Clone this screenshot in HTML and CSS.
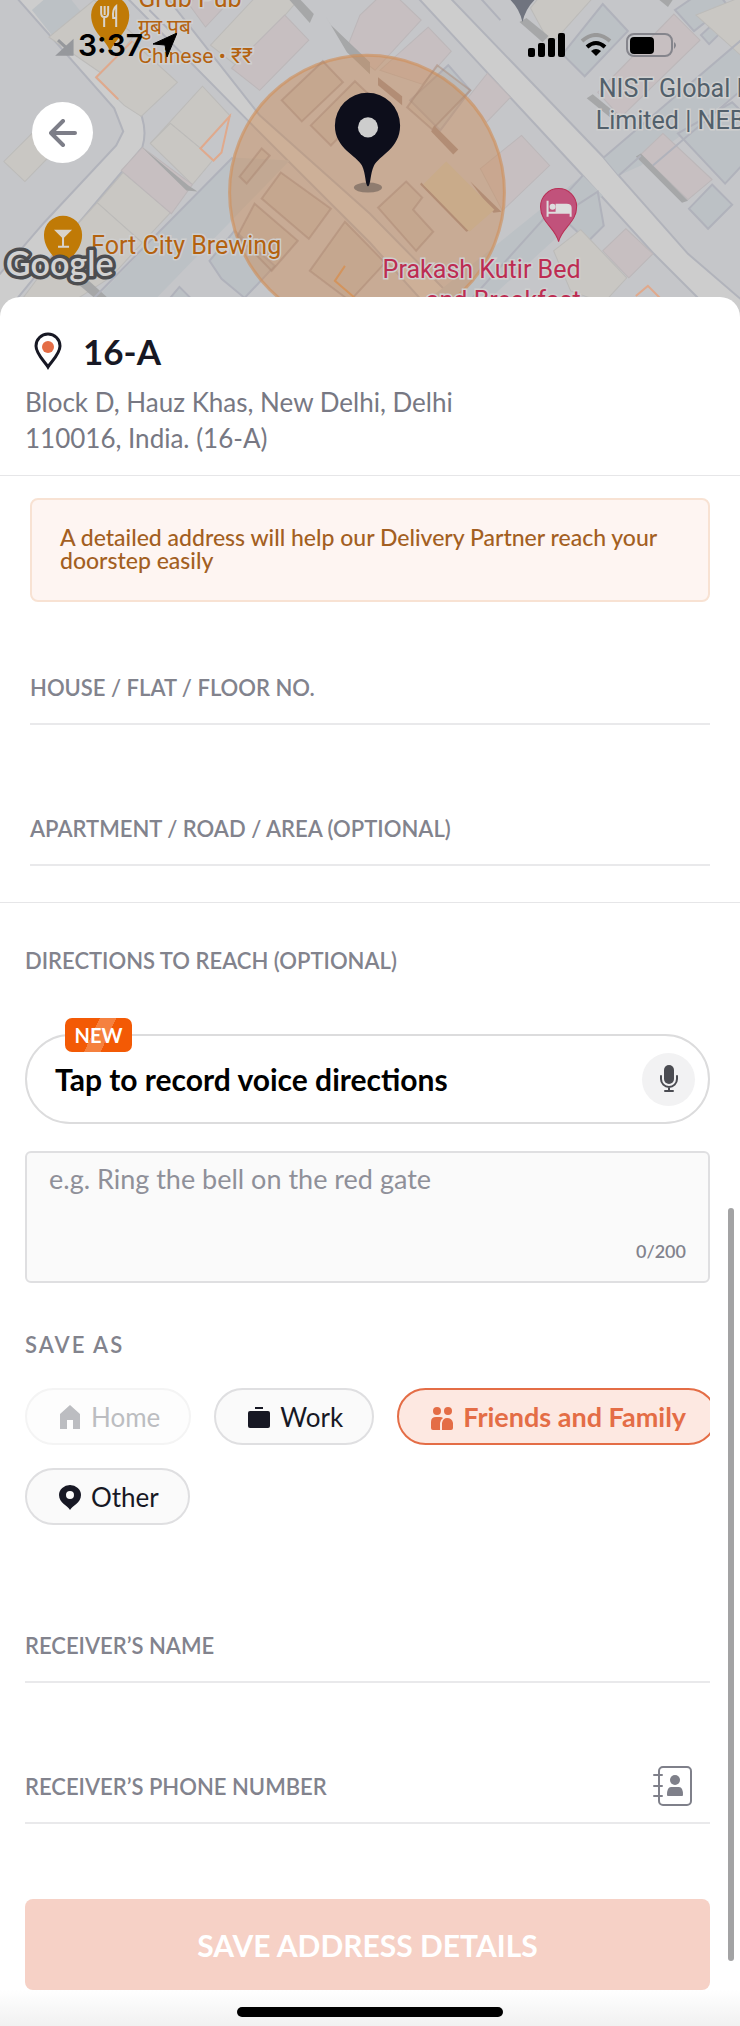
FILE: index.html
```html
<!DOCTYPE html>
<html lang="en">
<head>
  <meta charset="UTF-8">
  <meta name="viewport" content="width=device-width, initial-scale=1.0">
  <title>Address Details</title>
  <link rel="stylesheet" href="styles.css">
</head>
<body>
  <div class="map">
    <svg class="map-canvas" viewBox="0 0 740 316" preserveAspectRatio="xMidYMin slice" aria-hidden="true">
      <rect width="740" height="316" fill="#c5c6c9"/>
      <!-- roads -->
      <g fill="#cdcdcd" stroke="#b1b3bb" stroke-width="2">
        <path d="M18 -2L115 108L124 131L117 145L45 222L-5 280V320H0L80 222L143 147Q150 125 135 100L45 -2Z"/>
        <path d="M128 -2L255 127L370 242L440 320H475L370 213L260 115L168 -2Z"/>
        <path d="M418 -2L582 175L653 253L720 320H765L687 253L618 175L603 157L450 -2Z"/>
      </g>
      <!-- buildings -->
      <g fill="#bcc1c5" stroke="#b0b2bb" stroke-width="2">
        <path d="M33 10L48 -3H70L82 12L55 38Z" stroke="none"/>
        <path d="M233 157L75 320H135L290 160Z" stroke="none"/>
        <path d="M603 157L740 40V90L640 165L618 175Z" stroke="none"/>
        <path d="M582 175L430 297H490L602 195Z" stroke="none"/>
        <path d="M602 4L627 31L584 76L562 54Z"/>
        <path d="M674 10L693 -3L720 -3L726 5L693 31Z"/>
        <path d="M714 22L721 31L708 44L700 35Z"/>
        <path d="M677 133L731 102L750 120V155L724 183Z"/>
        <path d="M711 184L731 204L707 228L688 208Z"/>
        <path d="M597 191L603 225L587 241L560 215Z"/>
        <path d="M448 65L470 90L440 130L410 100Z"/>
        <path d="M210 260L235 230L275 265L245 297L222 278Z"/>
        <path d="M155 316L180 286L210 316Z"/>
      </g>
      <g fill="#c9c7c3" stroke="#bcbbb9" stroke-width="1">
        <path d="M50 37L95 0L135 35L105 75Z"/>
        <path d="M97 78L133 41L178 82L142 116L125 105Z"/>
        <path d="M151 143L203 86L231 116L201 148L171 123Z"/>
        <path d="M151 143L171 123L201 148L213 160L193 184Z"/>
        <path d="M5 161L35 131L58 148L26 181Z"/>
        <path d="M98 202L124 172L171 212L143 242Z"/>
        <path d="M80 222L98 202L143 242L112 276L50 316H10Z"/>
        <path d="M211 45L255 -2H300L240 68Z"/>
        <path d="M530 8L538 -2H592L550 45Z"/>
        <path d="M553 250L580 229L626 277L603 302L570 290Z"/>
        <path d="M695 15L745 -5V60Z"/>
      </g>
      <g fill="#c7bfc1" stroke="#bcb7b9" stroke-width="1">
        <path d="M143 147L193 184L172 213L122 170Z"/>
        <path d="M190 5L195 -2H233L206 27Z"/>
        <path d="M232 68L285 15L309 40L260 90Z"/>
        <path d="M360 15L378 -2H398L421 20L375 70L347 48Z"/>
        <path d="M428 27L451 51L422 84L380 70Z"/>
        <path d="M487 73L510 97L486 122L468 97Z"/>
        <path d="M521 135L549 165L502 210L480 168Z"/>
        <path d="M673 14L699 40L620 117L597 92Z"/>
        <path d="M662 133L711 179L687 199L640 154Z"/>
        <path d="M625 228L652 253L628 277L602 250Z"/>
      </g>
      <g fill="#a6a7a8">
        <path d="M143 147L189 185L198 191L187 190Z"/>
        <path d="M80 284L90 280L112 300L105 305Z"/>
        <path d="M288 -2H299L314 14L310 23Z"/>
        <path d="M325 15L331 25L370 62V74L347 52Z"/>
        <path d="M519 22L526 18L548 36L542 42Z"/>
        <path d="M586 98L592 94L620 117L612 119Z"/>
        <path d="M635 156L640 153L687 200L681 202Z"/>
        <path d="M656 -2H673L667 7Z"/>
      </g>
      <g fill="none" stroke="#b0b2bb" stroke-width="2">
        <path d="M150 10L170 30M233 157L80 312M582 175L455 316M618 175L640 155M603 157L740 40M740 90L652 165M480 -2L500 20"/>
      </g>
      <g fill="none" stroke="#e0a98c" stroke-width="2">
        <path d="M230 116L201 148L214 160L222 152Z"/>
        <path d="M133 41L97 77L119 99"/>
        <path d="M635 295L647 285L662 300"/>
      </g>
      <path d="M59 40L70 50M73 42L73 54L60 54Z" stroke="#96989c" stroke-width="3" fill="#96989c"/>
      <!-- delivery radius -->
      <circle cx="367" cy="192" r="137" fill="#cc8042" fill-opacity=".38" stroke="#d0905c" stroke-opacity=".65" stroke-width="3"/>
      <g fill="#b98b6b" fill-opacity=".12" stroke="#a98672" stroke-opacity=".45" stroke-width="2">
        <path d="M323 61L343 82L302 121L282 100Z"/>
        <path d="M355 81L375 100L331 145L311 125Z"/>
        <path d="M437 65L470 90L432 129L407 107Z"/>
        <path d="M262 148L270 155L247 183L240 176Z"/>
        <path d="M281 172L331 208L309 238L262 198Z"/>
        <path d="M255 203L298 240L272 270L238 235Z"/>
        <path d="M406 181L422 197L413 209L433 231L416 250L378 207Z"/>
        <path d="M345 221L385 262L350 300L310 270Z"/>
      </g>
      <g fill="#b28d75">
        <path d="M378 77L402 96V105L378 85Z"/>
        <path d="M434 125L458 149L453 154L431 131Z"/>
        <path d="M421 182L471 229L466 231L420 184Z"/>
        <path d="M470 181L501 211L493 212Z"/>
      </g>
      <path d="M423 184L446 161L494 209L469 231Z" fill="#c9ab8a"/>
      <path d="M345 265L335 280L355 297" fill="none" stroke="#d3945d" stroke-width="2"/>
      <!-- places -->
      <path d="M111 52C108 40 92 33 92 15a19 19 0 0 1 38 0C130 33 114 40 111 52Z" fill="#c07a06"/>
      <path d="M102 6v7q0 4 3 4v10M105.500 6v9M109 6v7q0 4-3 4M117 27V6q-4 3-3 12h3" stroke="#d8d3cb" stroke-width="2" fill="none"/>
      <path d="M64 272C61 258 45 252 45 234a19 19 0 0 1 38 0C83 252 67 258 64 272Z" fill="#c07a06"/>
      <path d="M55 229H73L65 237V245H70V247H59V245H63V237Z" fill="#d8d3cb"/>
      <path d="M558 241C555 227 540 222 540 206a18 18 0 0 1 36 0C576 222 561 227 558 241Z" fill="#c1527b" stroke="#b82e54" stroke-width="1"/>
      <path d="M547 200V216M547 212H570M570 216V207q0-3-4-3H556v8" stroke="#ddd" stroke-width="2" fill="none"/>
      <path d="M556 204h10q4 0 4 4v4H556Z" fill="#ddd"/>
      <circle cx="552" cy="206" r="3" fill="#ddd"/>
      <path d="M508 -2H536Q525 8 522 22Q519 8 508 -2Z" fill="#70747f"/>
      <g class="map-text">
        <g class="food">
          <text x="139" y="7">Grub Pub</text>
          <text class="small" x="139" y="34">ग्रुब पब</text>
          <text class="small" x="139" y="63">Chinese • ₹₹</text>
          <text x="92" y="253">Fort City Brewing</text>
        </g>
        <g class="office">
          <text x="598" y="97">NIST Global I</text>
          <text x="595" y="129">Limited | NEB</text>
        </g>
        <g class="hotel">
          <text x="580" y="277">Prakash Kutir Bed</text>
          <text x="580" y="308">and Breakfast</text>
        </g>
      </g>
      <text class="google" x="7" y="275">Google</text>
      <!-- dropped pin -->
      <ellipse cx="368" cy="187" rx="14" ry="5" fill="#8f7c6f"/>
      <path d="M368 186C365 184 366 173 362 165C357 155 335 148 335 125a32 32 0 0 1 65 0C400 148 379 155 374 165C370 173 371 184 368 186Z" fill="#0d0e1b"/>
      <circle cx="368" cy="127" r="10" fill="#cdcdcd"/>
    </svg>

    <div class="status-bar">
      <div class="clock">
        <span>3:37</span>
        <svg width="24" height="24" viewBox="0 0 24 24" aria-hidden="true"><path d="M24 0L14 24L12 12L0 11Z" stroke="#000" stroke-linejoin="round"/></svg>
      </div>
      <div class="indicators">
        <svg width="38" height="24" viewBox="0 0 38 24" aria-hidden="true">
          <rect x="0" y="15" width="7" height="9" rx="2"/><rect x="10" y="10" width="7" height="14" rx="2"/><rect x="20" y="5" width="7" height="19" rx="2"/><rect x="30" y="0" width="7" height="24" rx="2"/>
        </svg>
        <svg width="32" height="24" viewBox="0 0 32 24" fill="none" stroke-width="4" aria-hidden="true">
          <path d="M2 8Q16 -4 30 8" stroke="#999"/>
          <path d="M7 14Q16 6 25 14" stroke="#000"/>
          <path d="M11 18Q16 14 21 18L16 23Z" fill="#000"/>
        </svg>
        <svg width="52" height="24" viewBox="0 0 52 24" aria-hidden="true">
          <rect x="1" y="1" width="45" height="22" rx="7" fill="none" stroke="#85858c" stroke-width="2"/>
          <rect x="4" y="4" width="24" height="17" rx="4"/>
          <path d="M48 9q4 3 0 7Z" fill="#85858c"/>
        </svg>
      </div>
    </div>

    <button class="back" type="button" aria-label="Back">
      <svg width="28" height="28" viewBox="0 0 28 28" aria-hidden="true"><path d="M26 14H2M14 2L2 14L14 26" fill="none" stroke="#7d7e88" stroke-width="4" stroke-linecap="round" stroke-linejoin="round"/></svg>
    </button>
  </div>

  <form class="sheet">
    <header class="place">
      <div class="place-name">
        <svg width="28" height="38" viewBox="0 0 28 38" aria-hidden="true">
          <path d="M14 35C11 30 2 22 2 14a12 12 0 0 1 24 0C26 22 17 30 14 35Z" fill="#fff" stroke="#171824" stroke-width="3"/>
          <circle cx="14" cy="15" r="6" fill="#e46d46"/>
        </svg>
        <h1>16-A</h1>
      </div>
      <p>Block D, Hauz Khas, New Delhi, Delhi 110016, India. (16-A)</p>
    </header>

    <section class="address">
      <p class="notice">A detailed address will help our Delivery Partner reach your doorstep easily</p>
      <div class="field">
        <label for="house">HOUSE / FLAT / FLOOR NO.</label>
        <input id="house" type="text">
      </div>
      <div class="field">
        <label for="area">APARTMENT / ROAD / AREA (OPTIONAL)</label>
        <input id="area" type="text">
      </div>
    </section>

    <section class="details">
      <label class="heading" for="directions">DIRECTIONS TO REACH (OPTIONAL)</label>

      <button class="voice" type="button">
        <span class="badge">NEW</span>
        <span>Tap to record voice directions</span>
        <span class="mic">
          <svg width="20" height="28" viewBox="0 0 20 28" aria-hidden="true">
            <rect x="5" y="0" width="10" height="19" rx="5" fill="#4b4c52"/>
            <path d="M2 11v3a8 8 0 0 0 16 0v-3M10 22v4M6 26h8" fill="none" stroke="#4b4c52" stroke-width="2" stroke-linecap="round"/>
          </svg>
        </span>
      </button>

      <div class="directions">
        <textarea id="directions" maxlength="200" placeholder="e.g. Ring the bell on the red gate"></textarea>
        <span class="count">0/200</span>
      </div>

      <h2 class="heading save-as">SAVE AS</h2>
      <div class="chips">
        <div class="chip-row">
          <button class="chip" type="button" disabled>
            <svg width="22" height="26" viewBox="0 0 22 26" aria-hidden="true"><path d="M11 1L21 10V25H14V16H8V25H1V10Z"/></svg>
            Home
          </button>
          <button class="chip" type="button">
            <svg width="22" height="26" viewBox="0 0 22 26" aria-hidden="true"><rect x="7" y="3" width="8" height="2"/><rect x="0" y="7" width="22" height="17" rx="2"/></svg>
            Work
          </button>
          <button class="chip selected" type="button">
            <svg width="22" height="26" viewBox="0 0 22 26" aria-hidden="true">
              <circle cx="6" cy="7" r="4"/><circle cx="17" cy="7" r="4"/>
              <path d="M0 24V18Q0 13 5 13H9Q11 13 12 14Q9 16 9 19V26H2Q0 26 0 24Z"/>
              <path d="M11 26V19Q12 14 16 14Q21 14 22 19V24Q22 26 20 26Z"/>
            </svg>
            Friends and Family
          </button>
        </div>
        <div class="chip-row">
          <button class="chip" type="button">
            <svg width="22" height="26" viewBox="0 0 22 26" aria-hidden="true"><path fill-rule="evenodd" d="M11 26C9 22 0 19 0 11a11 10 0 0 1 22 0C22 19 13 22 11 26ZM11 7a4 4 0 1 0 0 8a4 4 0 0 0 0-8Z"/></svg>
            Other
          </button>
        </div>
      </div>

      <div class="field receiver">
        <label for="name">RECEIVER’S NAME</label>
        <input id="name" type="text">
      </div>
      <div class="field">
        <label for="phone">RECEIVER’S PHONE NUMBER</label>
        <input id="phone" type="tel">
        <button class="contacts" type="button" aria-label="Pick from contacts">
          <svg width="40" height="42" viewBox="0 0 40 42" aria-hidden="true">
            <rect x="6" y="2" width="32" height="38" rx="4" fill="none" stroke="#7f808a" stroke-width="2"/>
            <path d="M1 10H9M1 21H9M1 31H9" stroke="#7f808a" stroke-width="2" stroke-linecap="round"/>
            <circle cx="22" cy="15" r="5" fill="#7f808a"/>
            <path d="M14 30Q14 22 18 22H26Q30 22 30 30Q30 31 29 31H15Q14 31 14 30Z" fill="#7f808a"/>
          </svg>
        </button>
      </div>

      <button class="save" type="submit">SAVE ADDRESS DETAILS</button>
    </section>

    <footer class="home-area"><span class="home-indicator"></span></footer>
    <div class="scroll-thumb"></div>
  </form>
</body>
</html>
```

FILE: styles.css
```css
* {
  box-sizing: border-box;
}

body {
  margin: 0;
  background: #fff;
  color: #171824;
  font-family: Lato, "Open Sans", sans-serif;
}

button {
  font-family: inherit;
  padding: 0;
  border: none;
  cursor: pointer;
}

h1, h2, p {
  margin: 0;
}

svg {
  display: block;
  flex: none;
}

/* map */
.map {
  position: relative;
  height: 317px;
  overflow: hidden;
  background: #c5c6c9;
}

.map-canvas {
  width: 100%;
  height: 100%;
}

.map-text {
  font-family: Roboto, sans-serif;
  font-size: 25px;
  paint-order: stroke;
  stroke: #cfcfcf;
  stroke-width: 3px;
}

.map-text .small {
  font-size: 21px;
}

.food {
  fill: #b4620f;
}

.office {
  fill: #52606b;
}

.hotel {
  fill: #bd2c52;
  text-anchor: end;
}

.google {
  font-family: Lato, sans-serif;
  font-size: 34px;
  font-weight: 600;
  fill: #d2d2d2;
  stroke: #4c4d50;
  stroke-width: 7px;
  stroke-linejoin: round;
  paint-order: stroke;
}

.status-bar {
  position: absolute;
  top: 25px;
  left: 0;
  right: 0;
  display: flex;
  justify-content: space-between;
  align-items: center;
  height: 40px;
  padding: 0 62px 0 78px;
}

.clock {
  display: flex;
  align-items: center;
  gap: 10px;
  font-family: Inter, sans-serif;
  font-size: 30px;
  font-weight: 600;
  color: #000;
}

.indicators {
  display: flex;
  align-items: center;
  gap: 14px;
}

.back {
  position: absolute;
  top: 102px;
  left: 32px;
  display: flex;
  justify-content: center;
  align-items: center;
  width: 61px;
  height: 61px;
  border-radius: 50%;
  background: #fff;
}

/* bottom sheet */
.sheet {
  position: relative;
  margin-top: -20px;
  border-radius: 20px 20px 0 0;
  background: #fff;
}

.place {
  padding: 34px 25px 19px;
  border-bottom: 1px solid #e6e6e8;
}

.place-name {
  display: flex;
  align-items: center;
  gap: 21px;
  height: 40px;
  padding-left: 9px;
  margin-bottom: 13px;
}

.place-name h1 {
  font-size: 35px;
  font-weight: 700;
  line-height: 40px;
}

.place p {
  max-width: 480px;
  font-size: 26px;
  line-height: 36px;
  color: #777883;
}

.address {
  padding: 22px 30px 36px;
  border-bottom: 1px solid #e6e6e8;
}

.notice {
  margin-bottom: 72px;
  padding: 26px 28px 28px;
  border: 2px solid #f8e2d3;
  border-radius: 8px;
  background: #fef5f2;
  font-size: 23px;
  font-weight: 500;
  line-height: 23px;
  color: #a35f22;
}

.field {
  position: relative;
  display: flex;
  flex-direction: column;
  border-bottom: 2px solid #e9e9eb;
}

.field + .field {
  margin-top: 90px;
}

.field label,
.heading {
  display: block;
  font-size: 22px;
  font-weight: 600;
  line-height: 28px;
  color: #82838d;
}

.field input {
  width: 100%;
  height: 21px;
  padding: 0;
  border: none;
  outline: none;
  background: transparent;
  font: inherit;
}

.details {
  padding: 44px 30px 0 25px;
}

.voice {
  position: relative;
  display: flex;
  justify-content: space-between;
  align-items: center;
  width: 100%;
  height: 90px;
  margin: 59px 0 27px;
  padding: 0 13px 0 28px;
  border: 2px solid #dcdcdd;
  border-radius: 45px;
  background: #fff;
  font-size: 30px;
  font-weight: 700;
  color: #000;
}

.badge {
  position: absolute;
  top: -18px;
  left: 38px;
  width: 67px;
  border-radius: 7px;
  background: linear-gradient(115deg, #f35a05 42%, #f5813f 42%, #f5813f 62%, #f35a05 62%);
  font-size: 20px;
  line-height: 34px;
  color: #fff;
}

.mic {
  display: flex;
  justify-content: center;
  align-items: center;
  width: 53px;
  height: 53px;
  border-radius: 50%;
  background: #f2f2f3;
}

.directions {
  display: flex;
  flex-direction: column;
  height: 132px;
  margin-bottom: 48px;
  padding: 8px 22px 18px;
  border: 2px solid #dfdfe1;
  border-radius: 6px;
  background: #fafafa;
}

.directions textarea {
  flex: 1;
  padding: 0;
  border: none;
  outline: none;
  resize: none;
  background: transparent;
  font-family: inherit;
  font-size: 27px;
  line-height: 36px;
}

.directions textarea::placeholder {
  color: #8f9099;
}

.count {
  align-self: flex-end;
  font-size: 18px;
  font-weight: 600;
  line-height: 24px;
  color: #82838d;
}

.save-as {
  margin-bottom: 29px;
  letter-spacing: 2px;
}

.chips {
  display: flex;
  flex-direction: column;
  gap: 23px;
  margin-bottom: 107px;
}

.chip-row {
  display: flex;
  gap: 23px;
  overflow: hidden;
}

.chip {
  display: flex;
  flex: none;
  align-items: center;
  gap: 10px;
  height: 57px;
  padding: 0 29px 0 32px;
  border: 2px solid #dfdfe1;
  border-radius: 29px;
  background: #fafafa;
  font-size: 26px;
  color: #171824;
  fill: currentColor;
}

.chip:disabled {
  border-color: #f4f4f4;
  background: #fdfdfd;
  color: #bcbdc1;
}

.chip.selected {
  border-color: #e46d46;
  background: #fde8e1;
  font-size: 27px;
  font-weight: 700;
  color: #e46d46;
}

.contacts {
  position: absolute;
  right: 17px;
  bottom: 15px;
  background: none;
}

.save {
  display: block;
  width: 100%;
  height: 91px;
  margin-top: 75px;
  border-radius: 8px;
  background: #f6d1c6;
  font-size: 30px;
  font-weight: 700;
  color: #fff;
}

.home-area {
  display: flex;
  justify-content: center;
  height: 36px;
  padding-top: 17px;
  background: linear-gradient(#fff, #f1f1f1);
}

.home-indicator {
  width: 36%;
  height: 10px;
  border-radius: 5px;
  background: #000;
}

.scroll-thumb {
  position: absolute;
  right: 6px;
  bottom: 65px;
  width: 6px;
  height: 753px;
  border-radius: 3px;
  background: #a3a3a4;
}
```
